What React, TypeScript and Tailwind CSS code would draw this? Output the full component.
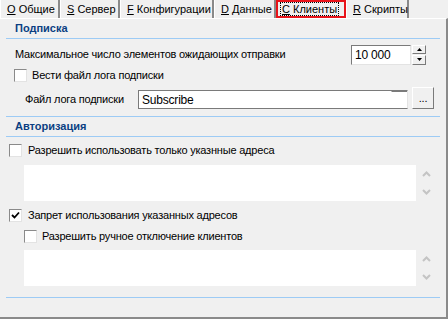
import React from "react";

const Check = ({ checked = false }: { checked?: boolean }) => (
  <div className="w-[13px] h-[13px] bg-white border border-t-[#8a8a8a] border-l-[#8a8a8a] border-b-[#e3e3e3] border-r-[#e3e3e3] flex items-center justify-center shrink-0">
    {checked && (
      <svg width="9" height="9" viewBox="0 0 9 9">
        <path d="M1 4 L3.5 6.5 L8 1.5" stroke="#000" strokeWidth="1.8" fill="none" />
      </svg>
    )}
  </div>
);

const Tab = ({ k, label, w, selected = false }: { k: string; label: string; w: string; selected?: boolean }) => (
  <div
    className={`${w} h-full flex items-center shrink-0 whitespace-nowrap ${
      selected
        ? "border-2 border-[#e8141b] pl-[3px]"
        : "border-l border-l-white border-r-2 border-r-[#8a8a8a] pl-[6px]"
    }`}
  >
    <span className={selected ? "outline outline-1 outline-dotted outline-black px-[1px] leading-[12px]" : ""}>
      <span className="underline">{k}</span> {label}
    </span>
  </div>
);

const ScrollArrows = () => (
  <div className="w-[14px] flex flex-col items-center justify-between py-[6px] ml-[3px]">
    <svg width="9" height="6" viewBox="0 0 9 6">
      <path d="M1 5 L4.5 1.5 L8 5" stroke="#c4c4c4" strokeWidth="2" fill="none" />
    </svg>
    <svg width="9" height="6" viewBox="0 0 9 6">
      <path d="M1 1 L4.5 4.5 L8 1" stroke="#c4c4c4" strokeWidth="2" fill="none" />
    </svg>
  </div>
);

const Line = () => <div className="mx-[6px] h-px bg-[#9dcbf5]" />;

const Header = ({ text }: { text: string }) => (
  <div className="h-[19px] flex items-center pl-[15px] font-bold text-[#0b3f82] tracking-normal">{text}</div>
);

export default function App() {
  return (
    <div
      className="w-[448px] h-[319px] bg-[#f0f0f0] flex flex-col text-[11px] text-black overflow-hidden"
      style={{ fontFamily: '"Liberation Sans", Arial, sans-serif' }}
    >
      <div className="h-[18px] flex items-stretch">
        <Tab k="O" label="Общие" w="w-[60px]" />
        <Tab k="S" label="Сервер" w="w-[60px]" />
        <Tab k="F" label="Конфигурации" w="w-[94px]" />
        <Tab k="D" label="Данные" w="w-[62px]" />
        <Tab k="C" label="Клиенты" w="w-[70px]" selected />
        <Tab k="R" label="Скрипты" w="w-[63px]" />
      </div>
      <div className="flex-1 border-t border-t-white border-r-2 border-r-[#8a8a8a] border-b-2 border-b-[#8a8a8a] flex flex-col tracking-[-0.2px]">
        <Header text="Подписка" />
        <Line />
        <div className="h-[21px] mt-[5px] flex items-center pl-[15px]">
          <span className="flex-1">Максимальное число элементов ожидающих отправки</span>
          <div className="w-[60px] h-[20px] bg-white border border-t-[#7a7a7a] border-l-[#7a7a7a] border-b-[#e3e3e3] border-r-[#e3e3e3] flex items-center pl-[3px] text-[12px]">
            10 000
          </div>
          <div className="w-[14px] h-[20px] ml-[1px] mr-[20px] flex flex-col gap-[1px]">
            <div className="flex-1 bg-[#f0f0f0] border border-t-white border-l-white border-b-[#7a7a7a] border-r-[#7a7a7a] flex items-center justify-center">
              <svg width="5" height="3" viewBox="0 0 5 3"><path d="M0 3 L2.5 0 L5 3Z" fill="#000" /></svg>
            </div>
            <div className="flex-1 bg-[#f0f0f0] border border-t-white border-l-white border-b-[#7a7a7a] border-r-[#7a7a7a] flex items-center justify-center">
              <svg width="5" height="3" viewBox="0 0 5 3"><path d="M0 0 L2.5 3 L5 0Z" fill="#000" /></svg>
            </div>
          </div>
        </div>
        <div className="h-[13px] mt-[4px] flex items-center pl-[14px] gap-[5px]">
          <Check />
          <span>Вести файл лога подписки</span>
        </div>
        <div className="h-[22px] mt-[5px] flex items-end pl-[25px]">
          <span className="w-[113px] h-[19px] flex items-center">Файл лога подписки</span>
          <div className="w-[270px] h-[19px] bg-white border border-t-[#7a7a7a] border-l-[#7a7a7a] border-b-[#7a7a7a] border-r-[#e3e3e3] flex items-center pl-[3px] text-[12px]">
            <span className="flex-1">Subscribe</span>
            <div className="w-[16px] h-full border-l border-l-white border-t border-t-[#7a7a7a]" />
          </div>
          <div className="w-[22px] h-[22px] ml-[4px] bg-[#f0f0f0] border border-t-white border-l-white border-b-[#7a7a7a] border-r-[#7a7a7a] flex items-center justify-center leading-none">
            ...
          </div>
        </div>
        <div className="mt-[7px]">
          <Line />
        </div>
        <Header text="Авторизация" />
        <Line />
        <div className="h-[13px] mt-[7px] flex items-center pl-[9px] gap-[6px]">
          <Check />
          <span>Разрешить использовать только указнные адреса</span>
        </div>
        <div className="h-[36px] mt-[8px] flex pl-[24px]">
          <div className="w-[392px] h-full bg-white" />
          <ScrollArrows />
        </div>
        <div className="h-[12px] mt-[8px] flex items-center pl-[9px] gap-[6px]">
          <Check checked />
          <span>Запрет использования указанных адресов</span>
        </div>
        <div className="h-[13px] mt-[9px] flex items-center pl-[24px] gap-[5px]">
          <Check />
          <span>Разрешить ручное отключение клиентов</span>
        </div>
        <div className="h-[36px] mt-[7px] flex pl-[24px]">
          <div className="w-[392px] h-full bg-white" />
          <ScrollArrows />
        </div>
        <div className="mt-[11px]">
          <Line />
        </div>
      </div>
    </div>
  );
}
